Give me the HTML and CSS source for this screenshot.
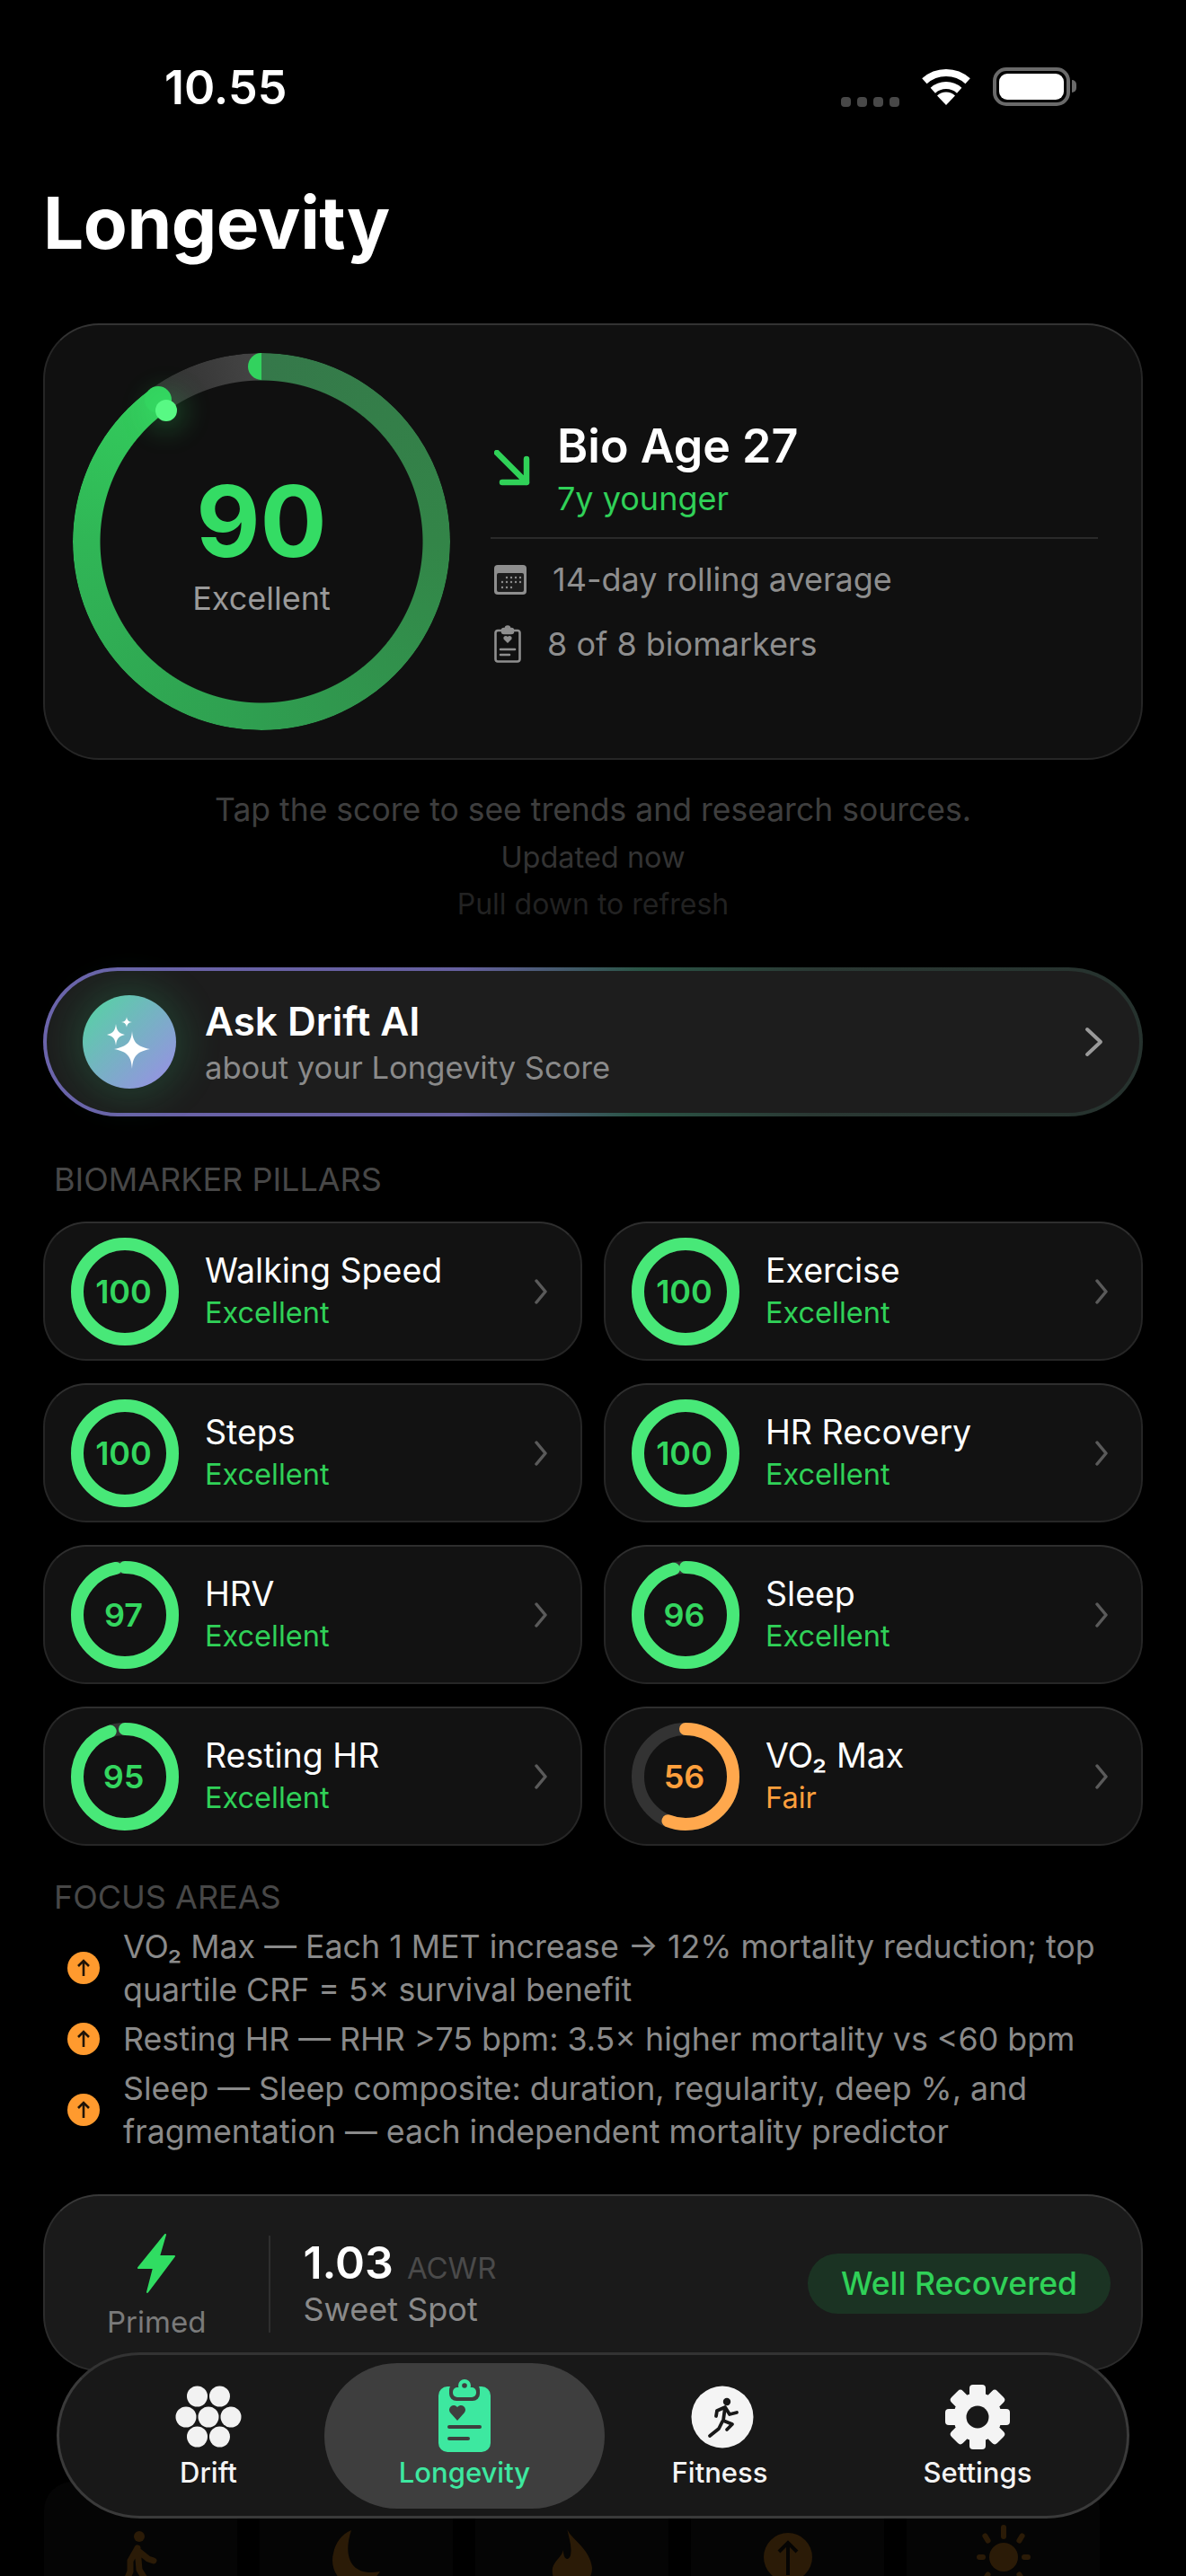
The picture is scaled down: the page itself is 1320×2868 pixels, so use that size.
FILE: index.html
```html
<!DOCTYPE html>
<html lang="en">
<head>
    <meta charset="UTF-8">
    <meta name="viewport" content="width=device-width, initial-scale=1.0">
    <title>Longevity</title>
    <link rel="stylesheet" href="styles.css">
</head>
<body>
<div class="screen">
    <div class="status">
        <span class="time">10.55</span>
        <div class="status-icons">
            <div class="signal"><i></i><i></i><i></i><i></i></div>
            <svg class="wifi" width="58" height="42" viewBox="0 0 58 42">
                <path d="M4.9 15.2A36 36 0 0 1 53.1 15.2M14.3 25.7A22 22 0 0 1 43.7 25.7" fill="none" stroke="#fff" stroke-width="8"/>
                <path d="M29 42L19 31.6A14 14 0 0 1 39 31.6Z" fill="#fff"/>
            </svg>
            <div class="battery"><div class="battery-fill"></div></div>
            <div class="battery-nub"></div>
        </div>
    </div>

    <h1 class="title">Longevity</h1>

    <div class="hero">
        <div class="ring">
            <div class="ring-arc"></div>
            <div class="ring-start"></div>
            <div class="ring-end"></div>
            <div class="ring-dot"></div>
            <div class="ring-score">90</div>
            <div class="ring-label">Excellent</div>
        </div>
        <div class="hero-info">
            <div class="bio">
                <svg width="40" height="40" viewBox="0 0 40 40" fill="none" stroke="#30d158" stroke-width="6.500" stroke-linecap="round" stroke-linejoin="round">
                    <path d="M3 3L36 36M36 10V36H9"/>
                </svg>
                <div>
                    <div class="bio-age">Bio Age 27</div>
                    <div class="bio-diff">7y younger</div>
                </div>
            </div>
            <div class="hero-row">
                <svg width="36" height="33" viewBox="0 0 36 33">
                    <rect width="36" height="33" rx="4" fill="#8e8e8e"/>
                    <rect x="3" y="9" width="30" height="21" rx="2" fill="#1c1c1c"/>
                    <g fill="#8e8e8e">
                        <circle cx="14" cy="14" r="1.2"/><circle cx="19" cy="14" r="1.2"/><circle cx="24" cy="14" r="1.2"/><circle cx="29" cy="14" r="1.2"/>
                        <circle cx="9" cy="19" r="1.2"/><circle cx="14" cy="19" r="1.2"/><circle cx="19" cy="19" r="1.2"/><circle cx="24" cy="19" r="1.2"/><circle cx="29" cy="19" r="1.2"/>
                        <circle cx="9" cy="25" r="1.2"/><circle cx="14" cy="25" r="1.2"/><circle cx="19" cy="25" r="1.2"/>
                    </g>
                </svg>
                <span>14-day rolling average</span>
            </div>
            <div class="hero-row hero-row-tall">
                <svg width="30" height="42" viewBox="0 0 30 42" fill="none" stroke="#8e8e8e" stroke-width="2.6" stroke-linecap="round">
                    <path d="M9 6H4a2.5 2.5 0 0 0-2.5 2.5V38A2.5 2.5 0 0 0 4 40.5H26A2.5 2.5 0 0 0 28.500 38V8.500A2.500 2.500 0 0 0 26 6H21"/>
                    <rect x="9" y="4" width="12" height="5" rx="2" fill="#8e8e8e"/>
                    <circle cx="15" cy="3.500" r="2" />
                    <path d="M15 20L10.500 15.500A2.600 2.600 0 0 1 15 13A2.600 2.600 0 0 1 19.500 15.500Z" fill="#8e8e8e" stroke="none"/>
                    <path d="M7 27H23M7 33H17"/>
                </svg>
                <span>8 of 8 biomarkers</span>
            </div>
        </div>
    </div>

    <div class="notes">
        <p class="note-tap">Tap the score to see trends and research sources.</p>
        <p class="note-updated">Updated now</p>
        <p class="note-pull">Pull down to refresh</p>
    </div>

    <div class="ask">
        <div class="ask-icon">
            <svg width="104" height="104" viewBox="0 0 104 104" fill="#fff">
                <path d="M55 40C56 52 60 57 75 60C60 63 56 68 55 82C54 68 50 63 35 60C50 57 54 52 55 40Z"/>
                <path d="M37 32C38 40 40 42 47 44C40 46 38 48 37 56C36 48 34 46 27 44C34 42 36 40 37 32Z"/>
                <path d="M49 24C49.500 28 51 29.500 55 30C51 30.500 49.500 32 49 36C48.500 32 47 30.500 43 30C47 29.500 48.500 28 49 24Z"/>
            </svg>
        </div>
        <div class="ask-text">
            <div class="ask-title">Ask Drift AI</div>
            <div class="ask-sub">about your Longevity Score</div>
        </div>
        <svg class="ask-chevron" width="21" height="34" viewBox="0 0 21 34" fill="none" stroke="#9a9a9a" stroke-width="4" stroke-linecap="round" stroke-linejoin="round">
            <path d="M3 3L18 17L3 31"/>
        </svg>
    </div>

    <div class="section-label pillars-label">BIOMARKER PILLARS</div>

    <div class="pillars">
        <div class="pillar">
            <div class="p-ring green">
                <svg width="120" height="120" viewBox="0 0 120 120"><circle class="p-track" cx="60" cy="60" r="53"/><circle class="p-value" cx="60" cy="60" r="53" pathLength="100" stroke-dasharray="100 100"/></svg>
                <span>100</span>
            </div>
            <div class="p-text"><div class="p-name">Walking Speed</div><div class="p-status">Excellent</div></div>
            <svg class="p-chevron" width="14" height="28" viewBox="0 0 14 28"><path d="M2 2L12 14L2 26"/></svg>
        </div>
        <div class="pillar">
            <div class="p-ring green">
                <svg width="120" height="120" viewBox="0 0 120 120"><circle class="p-track" cx="60" cy="60" r="53"/><circle class="p-value" cx="60" cy="60" r="53" pathLength="100" stroke-dasharray="100 100"/></svg>
                <span>100</span>
            </div>
            <div class="p-text"><div class="p-name">Exercise</div><div class="p-status">Excellent</div></div>
            <svg class="p-chevron" width="14" height="28" viewBox="0 0 14 28"><path d="M2 2L12 14L2 26"/></svg>
        </div>
        <div class="pillar">
            <div class="p-ring green">
                <svg width="120" height="120" viewBox="0 0 120 120"><circle class="p-track" cx="60" cy="60" r="53"/><circle class="p-value" cx="60" cy="60" r="53" pathLength="100" stroke-dasharray="100 100"/></svg>
                <span>100</span>
            </div>
            <div class="p-text"><div class="p-name">Steps</div><div class="p-status">Excellent</div></div>
            <svg class="p-chevron" width="14" height="28" viewBox="0 0 14 28"><path d="M2 2L12 14L2 26"/></svg>
        </div>
        <div class="pillar">
            <div class="p-ring green">
                <svg width="120" height="120" viewBox="0 0 120 120"><circle class="p-track" cx="60" cy="60" r="53"/><circle class="p-value" cx="60" cy="60" r="53" pathLength="100" stroke-dasharray="100 100"/></svg>
                <span>100</span>
            </div>
            <div class="p-text"><div class="p-name">HR Recovery</div><div class="p-status">Excellent</div></div>
            <svg class="p-chevron" width="14" height="28" viewBox="0 0 14 28"><path d="M2 2L12 14L2 26"/></svg>
        </div>
        <div class="pillar">
            <div class="p-ring green">
                <svg width="120" height="120" viewBox="0 0 120 120"><circle class="p-track" cx="60" cy="60" r="53"/><circle class="p-value" cx="60" cy="60" r="53" pathLength="100" stroke-dasharray="97 100"/></svg>
                <span>97</span>
            </div>
            <div class="p-text"><div class="p-name">HRV</div><div class="p-status">Excellent</div></div>
            <svg class="p-chevron" width="14" height="28" viewBox="0 0 14 28"><path d="M2 2L12 14L2 26"/></svg>
        </div>
        <div class="pillar">
            <div class="p-ring green">
                <svg width="120" height="120" viewBox="0 0 120 120"><circle class="p-track" cx="60" cy="60" r="53"/><circle class="p-value" cx="60" cy="60" r="53" pathLength="100" stroke-dasharray="96 100"/></svg>
                <span>96</span>
            </div>
            <div class="p-text"><div class="p-name">Sleep</div><div class="p-status">Excellent</div></div>
            <svg class="p-chevron" width="14" height="28" viewBox="0 0 14 28"><path d="M2 2L12 14L2 26"/></svg>
        </div>
        <div class="pillar">
            <div class="p-ring green">
                <svg width="120" height="120" viewBox="0 0 120 120"><circle class="p-track" cx="60" cy="60" r="53"/><circle class="p-value" cx="60" cy="60" r="53" pathLength="100" stroke-dasharray="95 100"/></svg>
                <span>95</span>
            </div>
            <div class="p-text"><div class="p-name">Resting HR</div><div class="p-status">Excellent</div></div>
            <svg class="p-chevron" width="14" height="28" viewBox="0 0 14 28"><path d="M2 2L12 14L2 26"/></svg>
        </div>
        <div class="pillar">
            <div class="p-ring orange">
                <svg width="120" height="120" viewBox="0 0 120 120"><circle class="p-track" cx="60" cy="60" r="53"/><circle class="p-value" cx="60" cy="60" r="53" pathLength="100" stroke-dasharray="56 100"/></svg>
                <span>56</span>
            </div>
            <div class="p-text"><div class="p-name">VO₂ Max</div><div class="p-status fair">Fair</div></div>
            <svg class="p-chevron" width="14" height="28" viewBox="0 0 14 28"><path d="M2 2L12 14L2 26"/></svg>
        </div>
    </div>

    <div class="section-label focus-label">FOCUS AREAS</div>

    <div class="focus">
        <div class="focus-item">
            <svg class="focus-dot" width="36" height="36" viewBox="0 0 36 36"><circle cx="18" cy="18" r="18" fill="#ff9a2e"/><path d="M18 27V10M12 16L18 10L24 16" fill="none" stroke="#201408" stroke-width="2.600"/></svg>
            <p>VO₂ Max — Each 1 MET increase → 12% mortality reduction; top quartile CRF = 5× survival benefit</p>
        </div>
        <div class="focus-item">
            <svg class="focus-dot" width="36" height="36" viewBox="0 0 36 36"><circle cx="18" cy="18" r="18" fill="#ff9a2e"/><path d="M18 27V10M12 16L18 10L24 16" fill="none" stroke="#201408" stroke-width="2.600"/></svg>
            <p>Resting HR — RHR &gt;75 bpm: 3.5× higher mortality vs &lt;60 bpm</p>
        </div>
        <div class="focus-item">
            <svg class="focus-dot" width="36" height="36" viewBox="0 0 36 36"><circle cx="18" cy="18" r="18" fill="#ff9a2e"/><path d="M18 27V10M12 16L18 10L24 16" fill="none" stroke="#201408" stroke-width="2.600"/></svg>
            <p>Sleep — Sleep composite: duration, regularity, deep %, and fragmentation — each independent mortality predictor</p>
        </div>
    </div>

    <div class="readiness">
        <div class="primed">
            <svg width="44" height="68" viewBox="0 0 44 68">
                <path d="M32 2L2 39H19L12 66L42 26H25Z" fill="#30dd62" stroke="#30dd62" stroke-width="2" stroke-linejoin="round"/>
            </svg>
            <div class="primed-label">Primed</div>
        </div>
        <div class="readiness-line"></div>
        <div class="acwr">
            <div class="acwr-top"><span class="acwr-value">1.03</span><span class="acwr-unit">ACWR</span></div>
            <div class="acwr-zone">Sweet Spot</div>
        </div>
        <div class="badge">Well Recovered</div>
    </div>

    <div class="tiles">
        <div class="tile">
            <svg width="60" height="60" viewBox="0 0 60 60" fill="none" stroke="#2b1b07" stroke-width="7" stroke-linecap="round" stroke-linejoin="round">
                <circle cx="28" cy="7" r="6" fill="#2b1b07" stroke="none"/>
                <path d="M26 20L18 34V46M26 20L28 44L38 60M28 24L38 32L44 34M18 46L12 60"/>
            </svg>
        </div>
        <div class="tile">
            <svg width="60" height="60" viewBox="0 0 60 60"><path d="M24 0C14 30 24 52 56 46C50 56 38 62 28 62C8 60 0 40 4 26C6 14 14 4 24 0Z" fill="#2b1b07"/></svg>
        </div>
        <div class="tile">
            <svg width="60" height="60" viewBox="0 0 60 60"><path d="M24 -2C26 8 50 20 52 42C52 56 40 66 30 66C14 66 6 54 8 42C10 34 18 30 20 22C20 34 26 34 28 28C30 18 26 8 24 -2Z" fill="#2b1b07"/></svg>
        </div>
        <div class="tile">
            <svg width="60" height="60" viewBox="0 0 60 60"><circle cx="30" cy="30" r="27" fill="#2b1b07"/><path d="M30 50V14M20 24L30 14L40 24" fill="none" stroke="#060504" stroke-width="4"/></svg>
        </div>
        <div class="tile">
            <svg width="60" height="60" viewBox="0 0 60 60" fill="#2b1b07">
                <circle cx="30" cy="30" r="16"/>
                <rect x="27" y="-6" width="6" height="16" rx="3"/>
                <rect x="0" y="27" width="10" height="6" rx="3"/>
                <rect x="50" y="27" width="10" height="6" rx="3"/>
                <rect x="8" y="3" width="6" height="12" rx="3" transform="rotate(-32 11 9)"/>
                <rect x="46" y="3" width="6" height="12" rx="3" transform="rotate(32 49 9)"/>
                <rect x="8" y="46" width="6" height="12" rx="3" transform="rotate(32 11 52)"/>
                <rect x="46" y="46" width="6" height="12" rx="3" transform="rotate(-32 49 52)"/>
            </svg>
        </div>
    </div>

    <nav class="tabbar">
        <div class="tab tab-drift">
            <svg width="84" height="84" viewBox="0 0 84 84" fill="#f2f2f2">
                <circle cx="29.500" cy="19" r="11.500"/><circle cx="54.500" cy="19" r="11.500"/>
                <circle cx="17" cy="42" r="11.500"/><circle cx="42" cy="42" r="11.500"/><circle cx="67" cy="42" r="11.500"/>
                <circle cx="29.500" cy="64" r="11.500"/><circle cx="54.500" cy="64" r="11.500"/>
            </svg>
            <span>Drift</span>
        </div>
        <div class="tab tab-active">
            <svg width="84" height="84" viewBox="0 0 84 84">
                <rect x="13" y="8" width="58" height="73" rx="10" fill="#3de8a0"/>
                <rect x="25" y="4" width="34" height="20" rx="8" fill="#3e3e3e"/>
                <rect x="29" y="9" width="26" height="11" rx="5" fill="#3de8a0"/>
                <circle cx="42" cy="7" r="7" fill="#3de8a0"/>
                <circle cx="42" cy="7" r="2.800" fill="#3e3e3e"/>
                <path d="M34 46L26 37A5 5 0 0 1 34 31A5 5 0 0 1 42 37Z" fill="#3e3e3e"/>
                <path d="M25 53H59M25 66H46" stroke="#3e3e3e" stroke-width="4" stroke-linecap="round"/>
            </svg>
            <span>Longevity</span>
        </div>
        <div class="tab tab-fitness">
            <svg width="84" height="84" viewBox="0 0 84 84">
                <circle cx="42" cy="42" r="34.500" fill="#f4f4f4"/>
                <circle cx="47" cy="25" r="4.200" fill="#181818"/>
                <path d="M45 31L43 46M36 35L45 31L50 39L58 37M36 35L35 41M43 46L53 50L47 56M42 47L38 55L28 63" fill="none" stroke="#181818" stroke-width="3.800" stroke-linecap="round" stroke-linejoin="round"/>
            </svg>
            <span>Fitness</span>
        </div>
        <div class="tab tab-settings">
            <svg width="84" height="84" viewBox="-42 -42 84 84">
                <circle r="27" fill="#f4f4f4"/>
                <g fill="#f4f4f4">
                    <rect x="-9" y="-36" width="18" height="72" rx="4"/>
                    <rect x="-9" y="-36" width="18" height="72" rx="4" transform="rotate(45)"/>
                    <rect x="-9" y="-36" width="18" height="72" rx="4" transform="rotate(90)"/>
                    <rect x="-9" y="-36" width="18" height="72" rx="4" transform="rotate(135)"/>
                </g>
                <circle r="12.500" fill="#181818"/>
            </svg>
            <span>Settings</span>
        </div>
    </nav>
</div>
</body>
</html>
```
FILE: styles.css
```css
* {
    box-sizing: border-box;
}
html, body {
    margin: 0;
    background: #000;
}
body {
    font-family: Inter, "Noto Sans", sans-serif;
    color: #fff;
}
p {
    margin: 0;
}
.screen {
    position: relative;
    width: 1320px;
    height: 2868px;
    padding: 0 48px;
    overflow: hidden;
    background: #000;
}

/* status bar */
.status {
    display: flex;
    justify-content: space-between;
    height: 200px;
    padding: 72px 74px 0 135px;
}
.time {
    font-size: 52px;
    line-height: 52px;
    font-weight: 600;
}
.status-icons {
    display: flex;
    align-items: flex-start;
    padding-top: 3px;
}
.signal {
    display: flex;
    gap: 7px;
    margin: 33px 23px 0 0;
}
.signal i {
    width: 11px;
    height: 11px;
    border-radius: 4px;
    background: #484848;
}
.wifi {
    margin-right: 23px;
}
.battery {
    width: 86px;
    height: 43px;
    padding: 3px;
    border: 4px solid #6a6a6a;
    border-radius: 15px;
}
.battery-fill {
    height: 100%;
    border-radius: 9px;
    background: #fff;
}
.battery-nub {
    width: 5px;
    height: 14px;
    margin: 14px 0 0 2px;
    border-radius: 0 5px 5px 0;
    background: #6a6a6a;
}

.title {
    margin: 0 0 64px 0;
    font-size: 80px;
    line-height: 96px;
    font-weight: 700;
    letter-spacing: -0.45px;
}

/* score card */
.hero {
    display: flex;
    align-items: center;
    height: 486px;
    padding-left: 31px;
    border: 2px solid #262626;
    border-top-color: #333;
    border-radius: 62px;
    background: #101010;
}
.ring {
    position: relative;
    flex: none;
    width: 420px;
    height: 420px;
    padding-top: 132px;
    text-align: center;
}
.ring-arc {
    position: absolute;
    inset: 0;
    border-radius: 50%;
    background: conic-gradient(#35784a 0deg, #338548 90deg, #2f9e50 180deg, #30b656 270deg, #33cc5c 324deg, #303030 324deg, #444 358deg, #35784a 360deg);
    -webkit-mask: radial-gradient(closest-side, transparent calc(100% - 31px), #000 calc(100% - 30px));
    mask: radial-gradient(closest-side, transparent calc(100% - 31px), #000 calc(100% - 30px));
}
.ring-start {
    position: absolute;
    left: 195px;
    top: 0;
    width: 15px;
    height: 30px;
    border-radius: 15px 0 0 15px;
    background: #32d25e;
}
.ring-end {
    position: absolute;
    left: 80px;
    top: 37px;
    width: 30px;
    height: 30px;
    border-radius: 50%;
    background: #33d15e;
}
.ring-dot {
    position: absolute;
    left: 92px;
    top: 52px;
    width: 24px;
    height: 24px;
    border-radius: 50%;
    background: #58f984;
    box-shadow: 0 0 30px 10px rgba(60, 255, 120, 0.22);
}
.ring-score {
    position: relative;
    font-size: 110px;
    line-height: 110px;
    font-weight: 700;
    color: #34dc64;
}
.ring-label {
    position: relative;
    margin-top: 9px;
    font-size: 36px;
    line-height: 44px;
    color: #9a9a9a;
}
.hero-info {
    width: 676px;
    margin-left: 45px;
}
.bio {
    display: flex;
    align-items: center;
    gap: 30px;
    padding: 0 0 21px 4px;
    border-bottom: 2px solid #2a2a2a;
}
.bio svg {
    margin-top: -2px;
}
.bio-age {
    font-size: 52px;
    line-height: 60px;
    font-weight: 600;
}
.bio-diff {
    margin-top: 6px;
    font-size: 36px;
    line-height: 44px;
    color: #30d158;
}
.hero-row {
    display: flex;
    align-items: center;
    gap: 29px;
    height: 44px;
    margin-top: 23px;
    padding-left: 4px;
    font-size: 36px;
    line-height: 44px;
    color: #8e8e8e;
}
.hero-row-tall {
    margin-top: 28px;
}

.notes {
    margin-top: 30px;
    text-align: center;
    font-size: 35.500px;
    line-height: 52px;
}
.note-tap {
    color: #3e3e3e;
}
.note-updated {
    font-size: 32.500px;
    color: #333;
    padding-top: 1px;
}
.note-pull {
    font-size: 32px;
    color: #222;
}

/* ask pill */
.ask {
    display: flex;
    align-items: center;
    height: 166px;
    margin-top: 44px;
    padding: 0 40px 0 40px;
    border: 4px solid transparent;
    border-radius: 83px;
    background: linear-gradient(#1d1d1d, #1d1d1d) padding-box, linear-gradient(92deg, #6c64ac 0%, #66609f 38%, #2a5546 54%, #2a3833 70%, #26322e 100%) border-box;
}
.ask-icon {
    flex: none;
    width: 104px;
    height: 104px;
    border-radius: 50%;
    background: linear-gradient(135deg, #52d6a0, #9c8ce8);
    box-shadow: 0 0 40px 12px rgba(50, 200, 120, 0.18);
}
.ask-text {
    flex: 1;
    margin-left: 32px;
}
.ask-title {
    font-size: 44px;
    line-height: 52px;
    font-weight: 600;
}
.ask-sub {
    margin-top: 3px;
    font-size: 34.600px;
    line-height: 44px;
    color: #8a8a8a;
}

.section-label {
    padding-left: 12px;
    font-size: 36px;
    line-height: 40px;
    color: #474747;
}
.pillars-label {
    margin-top: 50px;
}
.focus-label {
    margin-top: 37px;
}

/* pillar cards */
.pillars {
    display: grid;
    grid-template-columns: 600px 600px;
    grid-auto-rows: 155px;
    gap: 25px 24px;
    margin-top: 27px;
}
.pillar {
    display: flex;
    align-items: center;
    padding: 0 37px 0 29px;
    border: 2px solid #262626;
    border-top-color: #2e2e2e;
    border-radius: 48px;
    background: #121212;
}
.p-ring {
    display: grid;
    place-items: center;
    flex: none;
    width: 120px;
    height: 120px;
    font-size: 36px;
    font-weight: 600;
}
.p-ring svg,
.p-ring span {
    grid-area: 1 / 1;
}
.p-ring span {
    margin-right: 3px;
}
.p-ring svg {
    transform: rotate(-90deg);
    fill: none;
    stroke-width: 14;
}
.p-track {
    stroke: #333;
}
.p-value {
    stroke-linecap: round;
}
.green {
    color: #34d65f;
}
.green .p-value {
    stroke: #48e878;
}
.orange {
    color: #ff9f3c;
}
.orange .p-value {
    stroke: #ffa84d;
}
.p-text {
    flex: 1;
    margin: 0 0 2px 29px;
}
.p-name {
    font-size: 37.500px;
    line-height: 48px;
}
.p-status {
    margin-top: 3px;
    font-size: 32.500px;
    line-height: 40px;
    color: #30d158;
}
.p-status.fair {
    color: #ff9f3c;
}
.p-chevron {
    fill: none;
    stroke: #5a5a5a;
    stroke-width: 3.500;
    stroke-linecap: round;
    stroke-linejoin: round;
}

/* focus areas */
.focus {
    margin-top: 11px;
}
.focus-item {
    display: flex;
    align-items: center;
    gap: 26px;
    margin-bottom: 7px;
    padding-left: 27px;
    font-size: 35.750px;
    line-height: 48px;
    color: #8a8a8a;
}
.focus-dot {
    flex: none;
}

/* readiness card */
.readiness {
    display: flex;
    align-items: flex-start;
    height: 197px;
    margin-top: 46px;
    padding: 41px 34px 0 69px;
    border: 2px solid #2c2c2c;
    border-top-color: #383838;
    border-radius: 62px;
    background: #1a1a1a;
}
.primed {
    display: flex;
    flex-direction: column;
    align-items: center;
}
.primed-label {
    margin-top: 11px;
    font-size: 33px;
    line-height: 40px;
    color: #7a7a7a;
}
.readiness-line {
    width: 2px;
    height: 108px;
    margin: 3px 36px 0 70px;
    background: #2e2e2e;
}
.acwr {
    flex: 1;
    margin-top: 5px;
}
.acwr-top {
    display: flex;
    align-items: baseline;
    gap: 15px;
}
.acwr-value {
    font-size: 50px;
    line-height: 56px;
    font-weight: 600;
}
.acwr-unit {
    font-size: 33px;
    color: #4a4a4a;
}
.acwr-zone {
    margin-top: 2px;
    font-size: 36px;
    line-height: 44px;
    color: #8a8a8a;
}
.badge {
    height: 67px;
    margin-top: 23px;
    padding: 0 37px;
    border-radius: 34px;
    background: #1b3323;
    font-size: 35.500px;
    line-height: 67px;
    font-weight: 500;
    color: #30d158;
}

/* faded row behind the tab bar */
.tiles {
    display: flex;
    gap: 25px;
    margin: 123px 0 0 1px;
}
.tile {
    display: flex;
    justify-content: center;
    flex: none;
    width: 215px;
    height: 200px;
    padding-top: 54px;
    border-radius: 32px;
    background: #050505;
}
.tile svg {
    overflow: visible;
}

/* tab bar */
.tabbar {
    position: absolute;
    left: 63px;
    top: 2619px;
    display: flex;
    width: 1194px;
    height: 185px;
    padding: 9px 0 0 37px;
    border: 3px solid #3a3a3a;
    border-top-color: #333;
    border-radius: 93px;
    background: #181818;
}
.tab {
    display: flex;
    flex-direction: column;
    align-items: center;
    height: 162px;
    padding-top: 18px;
    font-size: 31px;
    line-height: 40px;
    font-weight: 500;
    color: #f4f4f4;
}
.tab svg {
    overflow: visible;
}
.tab-drift {
    width: 258px;
}
.tab-active {
    width: 312px;
    border-radius: 81px;
    background: #3e3e3e;
    color: #3de8a0;
}
.tab-fitness {
    width: 256px;
}
.tab-fitness svg {
    margin-left: 6px;
}
.tab-settings {
    flex: none;
    width: 318px;
}
```
